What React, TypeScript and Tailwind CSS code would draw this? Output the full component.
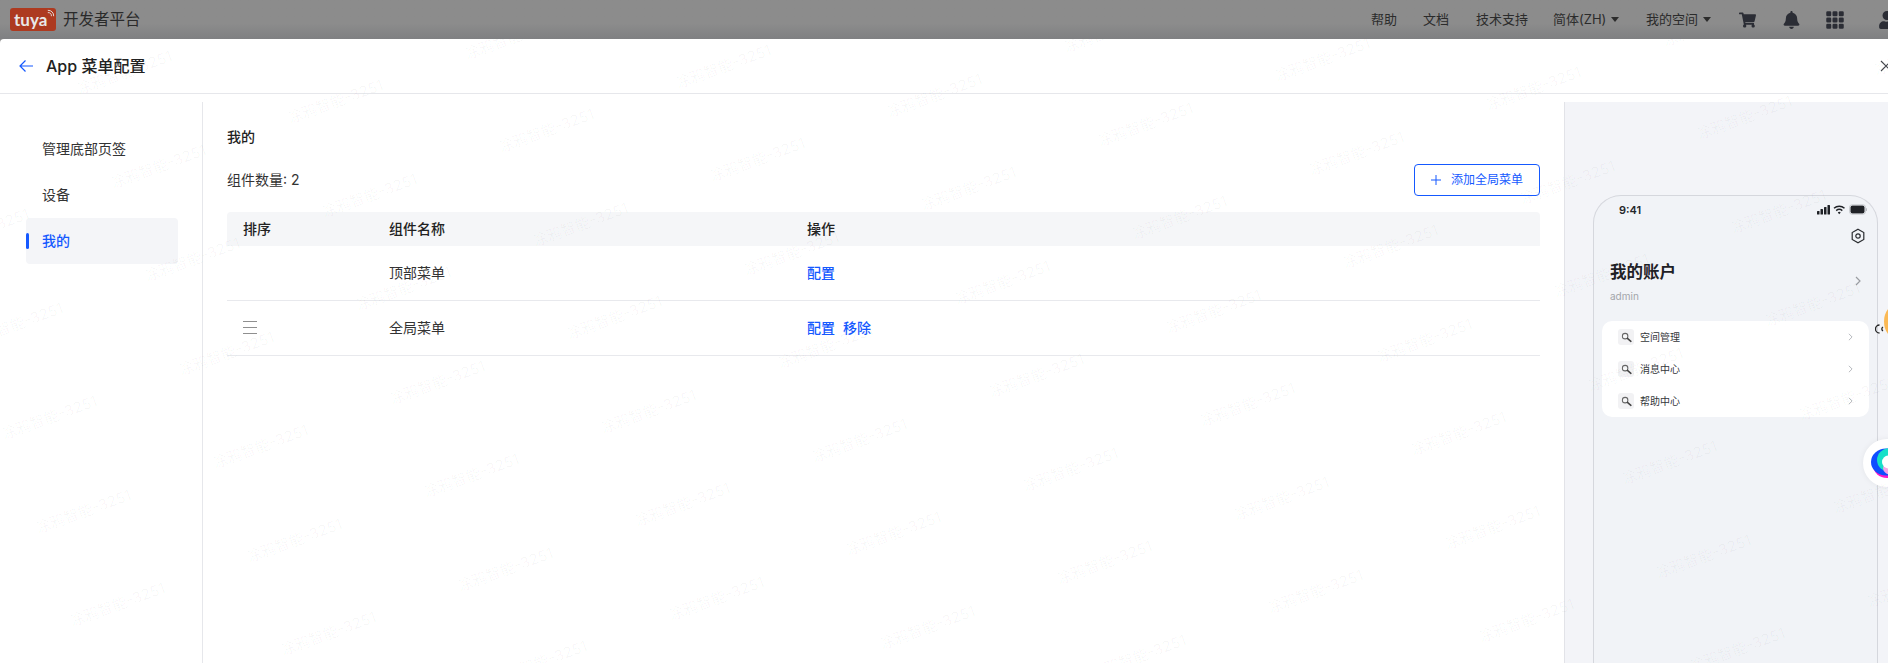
import { FaBell, FaShoppingCart, FaUser } from "react-icons/fa";
import { BsGrid3X3GapFill } from "react-icons/bs";

const FONT = "font-['Inter','Noto_Sans_CJK_SC',sans-serif]";

const TOP_LINKS = [
  { label: "帮助", className: "w-[52px]" },
  { label: "文档", className: "w-[53px]" },
  { label: "技术支持", className: "w-[77px]" },
];

const SIDE_ITEMS = ["管理底部页签", "设备", "我的"];
const PHONE_MENU = ["空间管理", "消息中心", "帮助中心"];

// watermark lattice, measured off the reference
const MARKS: { x: number; y: number }[] = [];
for (let i = -2; i < 12; i++) {
  for (let j = -8; j < 5; j++) {
    const x = -1 + i * 211 + j * 34;
    const y = 410 + i * 29 + j * 93.5;
    if (x > -120 && x < 1888 && y > 0 && y < 663) MARKS.push({ x, y });
  }
}

function Caret() {
  return <span className="ml-[5px] inline-block h-0 w-0 border-x-[4px] border-t-[5px] border-x-transparent border-t-[#2c2c2c]" />;
}

function TuyaLogo() {
  return (
    <div className="relative flex h-[23px] w-[46px] items-center rounded-[3px] bg-[#ad3a20] pl-[4px] font-['Lato',sans-serif] text-[17px] font-bold leading-none text-[#e8e8e8]">
      tuya
      <svg viewBox="0 0 10 10" className="absolute right-[1px] top-[1px] h-[9px] w-[9px]" fill="none" stroke="#e8e8e8" strokeWidth="1">
        <path d="M2 4a3.500 3.500 0 0 1 4 4M2 1.500a6 6 0 0 1 6.500 6.500" />
      </svg>
    </div>
  );
}

function TopBar() {
  return (
    <header className="flex h-[39px] shrink-0 items-center bg-gradient-to-b from-[#8c8c8c] from-60% to-[#7f8082] pl-[10px] text-[13px] text-[#2b2b2b]">
      <TuyaLogo />
      <span className="ml-[7px] text-[15.5px] text-[#2a2a2a]">开发者平台</span>
      <div className="ml-auto flex items-center">
        {TOP_LINKS.map((link) => (
          <span key={link.label} className={link.className}>
            {link.label}
          </span>
        ))}
        <span className="flex w-[93px] items-center">
          简体(ZH)
          <Caret />
        </span>
        <span className="flex w-[93px] items-center">
          我的空间
          <Caret />
        </span>
        <FaShoppingCart className="mr-[27px] h-[16px] w-[17px] text-[#2b2d35]" />
        <FaBell className="mr-[25px] h-[18px] w-[17px] text-[#2b2d35]" />
        <BsGrid3X3GapFill className="mr-[32px] h-[20px] w-[20px] text-[#2b2d35]" />
        <FaUser className="-mr-[9px] h-[18px] w-[20px] text-[#2b2d35]" />
      </div>
    </header>
  );
}

function Sidebar() {
  return (
    <aside className="w-[203px] shrink-0 border-r border-[#e6e7eb] pl-[26px] pt-6">
      {SIDE_ITEMS.map((item) => {
        const active = item === "我的";
        return (
          <div
            key={item}
            className={
              active
                ? "relative flex h-[46px] w-[152px] items-center rounded-[4px] bg-[#f4f5f8] pl-4 text-sm font-medium text-[#1559ff]"
                : "flex h-[46px] w-[152px] items-center pl-4 text-sm text-[#333]"
            }
          >
            {active && <span className="absolute left-0 top-[15px] h-4 w-[3px] rounded-[2px] bg-[#1559ff]" />}
            {item}
          </div>
        );
      })}
    </aside>
  );
}

function MenuTable() {
  return (
    <div className="mt-4 text-sm">
      <div className="grid h-[34px] grid-cols-[146px_418px_1fr] items-center rounded-t-[4px] bg-[#f5f6f8] pl-4 font-medium text-[#222]">
        <span>排序</span>
        <span>组件名称</span>
        <span>操作</span>
      </div>
      <div className="grid h-[55px] grid-cols-[146px_418px_1fr] items-center border-b border-[#e8e9ed] pb-[1px] pl-4 text-[#333]">
        <span />
        <span>顶部菜单</span>
        <span className="font-medium text-[#1559ff]">配置</span>
      </div>
      <div className="grid h-[55px] grid-cols-[146px_418px_1fr] items-center border-b border-[#e8e9ed] pb-[1px] pl-4 text-[#333]">
        <span className="flex h-[13px] w-[14px] flex-col justify-between">
          <span className="h-[1px] bg-[#8f8f8f]" />
          <span className="h-[1px] bg-[#8f8f8f]" />
          <span className="h-[1px] bg-[#8f8f8f]" />
        </span>
        <span>全局菜单</span>
        <span className="flex gap-2 font-medium text-[#1559ff]">
          <span>配置</span>
          <span>移除</span>
        </span>
      </div>
    </div>
  );
}

function StatusIcons() {
  return (
    <svg viewBox="0 0 50 12" className="h-[12px] w-[50px]" fill="#1f2126">
      <rect x="0" y="7" width="2.500" height="3.500" rx="0.500" />
      <rect x="3.500" y="5" width="2.500" height="5.500" rx="0.500" />
      <rect x="7" y="3" width="2.500" height="7.500" rx="0.500" />
      <rect x="10.500" y="1" width="2.500" height="9.500" rx="0.500" />
      <path d="M17 4.200a8 8 0 0 1 10.500 0" fill="none" stroke="#1f2126" strokeWidth="1.500" />
      <path d="M19.200 6.600a4.800 4.800 0 0 1 6.100 0" fill="none" stroke="#1f2126" strokeWidth="1.500" />
      <path d="M20.800 8.500a2 2 0 0 1 2.900 0l-1.450 1.800z" />
      <rect x="33.500" y="1.500" width="14" height="8" rx="2" />
      <rect x="32.500" y="0.800" width="16" height="9.400" rx="2.500" fill="none" stroke="#b9bbc0" strokeWidth="0.700" />
      <rect x="49" y="4" width="1" height="3" rx="0.500" fill="#b9bbc0" />
    </svg>
  );
}

function SearchTile() {
  return (
    <span className="flex h-4 w-4 items-center justify-center rounded-[3px] bg-[#f2f2f4]">
      <svg viewBox="0 0 12 12" className="h-[11px] w-[11px]" fill="none">
        <circle cx="4.500" cy="4.500" r="3" stroke="#666" strokeWidth="1.100" fill="#f7f7f8" />
        <path d="M7 7l3.800 3.200" stroke="#444" strokeWidth="1.700" strokeLinecap="round" />
      </svg>
    </span>
  );
}

function Chevron({ className }: { className: string }) {
  return (
    <svg viewBox="0 0 6 10" className={className} fill="none" stroke="currentColor" strokeWidth="1.200">
      <path d="M1 1l4 4-4 4" />
    </svg>
  );
}

function PhonePreview() {
  return (
    <section className="relative w-[324px] shrink-0 border-l border-[#e2e3e8] bg-[#f3f4f8] pl-[28px] pt-[93px]">
      <div className="h-[480px] w-[285px] rounded-t-[28px] border border-b-0 border-[#d5d7dd] bg-[#f1f3f7] px-2">
        <div className="flex h-[26px] items-center justify-between pl-[17px] pr-[2px] pt-[2px]">
          <span className="text-[11px] font-semibold text-[#25272c]">9:41</span>
          <StatusIcons />
        </div>
        <div className="flex justify-end pr-[3px] pt-[6px]">
          <svg viewBox="0 0 16 16" className="h-4 w-4" fill="none" stroke="#2a2c30" strokeWidth="1.200">
            <path d="M8 1.200l5.800 3.400v6.800L8 14.800l-5.800-3.400V4.600z" />
            <circle cx="8" cy="8" r="2.200" />
          </svg>
        </div>
        <div className="flex items-center justify-between pl-2 pr-[8px] pt-[16px]">
          <div>
            <div className="text-[16.500px] font-bold leading-[24px] text-[#1f2126]">我的账户</div>
            <div className="mt-[6px] text-[10px] leading-[12px] text-[#a3a5aa]">admin</div>
          </div>
          <Chevron className="h-[10px] w-[6px] text-[#9a9ca1]" />
        </div>
        <div className="mt-[19px] h-[96px] rounded-[10px] bg-white pl-4 pr-[16px]">
          {PHONE_MENU.map((item) => (
            <div key={item} className="flex h-8 items-center">
              <SearchTile />
              <span className="ml-[6px] text-[10px] text-[#35373b]">{item}</span>
              <Chevron className="ml-auto h-[8px] w-[5px] text-[#b5b7bc]" />
            </div>
          ))}
        </div>
      </div>
      {/* floating helpers, cut off by the window edge */}
      <div className="absolute left-[319px] top-[203px] h-[33px] w-[24px] rounded-[50%] bg-[#fbb955]" />
      <svg viewBox="0 0 9 10" className="absolute left-[310px] top-[222px] h-[10px] w-[9px]" fill="none" stroke="#222" strokeWidth="1.300">
        <path d="M4.500 1a4 4 0 0 0 0 8M8 3a2.300 2.300 0 0 0 0 4" />
      </svg>
      <div className="absolute left-[298px] top-[337px] flex h-12 w-12 items-center rounded-full bg-white pl-2 shadow-[0_0_6px_rgba(0,0,0,0.06)]">
        <svg viewBox="0 0 32 32" className="h-8 w-8">
          <ellipse cx="16" cy="18" rx="14" ry="13" fill="#ff19c8" />
          <ellipse cx="15" cy="15" rx="15" ry="13.500" fill="#0f4dff" />
          <ellipse cx="19" cy="13" rx="13" ry="12" fill="#17e0c8" />
          <ellipse cx="21" cy="21" rx="9" ry="7" fill="#f6a5e8" />
          <circle cx="17.500" cy="15" r="6.500" fill="#fff" />
        </svg>
      </div>
    </section>
  );
}

function Watermarks() {
  return (
    <div className="pointer-events-none absolute inset-0 overflow-hidden">
      {MARKS.map((m) => (
        <span
          key={`${m.x}-${m.y}`}
          className="absolute -rotate-[20deg] whitespace-nowrap text-[15px] leading-none text-black/[0.035]"
          style={{ left: m.x, top: m.y - 39 }}
        >
          涂鸦智能-3251
        </span>
      ))}
    </div>
  );
}

export default function App() {
  return (
    <div className={`flex h-[663px] w-full flex-col overflow-hidden bg-[#8c8c8c] ${FONT}`}>
      <TopBar />
      <div className="relative flex min-h-0 flex-1 flex-col rounded-tl-[4px] bg-white">
        <div className="flex h-[55px] shrink-0 items-center border-b border-[#e6e7eb] pl-[19px]">
          <svg viewBox="0 0 14 14" className="h-[14px] w-[14px]" fill="none" stroke="#1559ff" strokeWidth="1.200">
            <path d="M14 7H1M6.500 1.500L1 7l5.500 5.500" />
          </svg>
          <span className="ml-[13px] text-base font-medium text-[#222]">App 菜单配置</span>
          <svg viewBox="0 0 12 12" className="ml-auto -mr-[4px] h-3 w-3" fill="none" stroke="#44474d" strokeWidth="1.100">
            <path d="M1 1l10 10M11 1L1 11" />
          </svg>
        </div>
        <div className="flex min-h-0 flex-1 pt-2">
          <Sidebar />
          <main className="min-w-0 flex-1 px-6 pt-[25px]">
            <h2 className="text-sm font-medium leading-5 text-[#222]">我的</h2>
            <div className="mt-[17px] flex h-8 items-center justify-between text-sm text-[#333]">
              <span>组件数量: 2</span>
              <button className="flex h-8 w-[126px] items-center justify-center rounded-[4px] border border-[#1559ff] text-xs text-[#1559ff]">
                <svg viewBox="0 0 10 10" className="mr-[10px] h-[10px] w-[10px]" fill="none" stroke="#1559ff" strokeWidth="1">
                  <path d="M5 0v10M0 5h10" />
                </svg>
                添加全局菜单
              </button>
            </div>
            <MenuTable />
          </main>
          <PhonePreview />
        </div>
        <Watermarks />
      </div>
    </div>
  );
}
